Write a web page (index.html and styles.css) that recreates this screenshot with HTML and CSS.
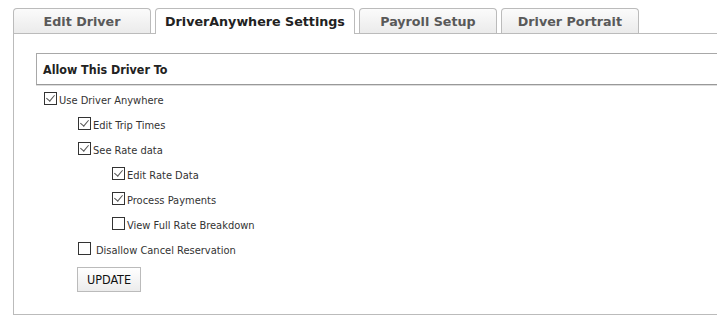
FILE: index.html
```html
<!DOCTYPE html>
<html lang="en">
<head>
    <meta charset="UTF-8">
    <meta name="viewport" content="width=device-width, initial-scale=1.0">
    <title>DriverAnywhere Settings</title>
    <link rel="stylesheet" href="styles.css">
</head>
<body>
    <div class="tabs">
        <div class="tab">Edit Driver</div>
        <div class="tab active">DriverAnywhere Settings</div>
        <div class="tab">Payroll Setup</div>
        <div class="tab">Driver Portrait</div>
    </div>

    <div class="panel">
        <div class="section-title">Allow This Driver To</div>
        <div class="options">
            <label class="option level-1"><input type="checkbox" checked>Use Driver Anywhere</label>
            <label class="option level-2"><input type="checkbox" checked>Edit Trip Times</label>
            <label class="option level-2"><input type="checkbox" checked>See Rate data</label>
            <label class="option level-3"><input type="checkbox" checked>Edit Rate Data</label>
            <label class="option level-3"><input type="checkbox" checked>Process Payments</label>
            <label class="option level-3"><input type="checkbox">View Full Rate Breakdown</label>
            <label class="option level-2 spaced"><input type="checkbox">Disallow Cancel Reservation</label>
        </div>
        <button type="button" class="update-button">UPDATE</button>
    </div>
</body>
</html>
```

FILE: styles.css
```css
body {
    margin: 0;
    padding: 0;
    background-color: #fff;
    font-family: "DejaVu Sans Condensed", "DejaVu Sans", sans-serif;
    font-size: 11px;
    color: #333;
    overflow: hidden;
}

.tabs {
    display: flex;
    align-items: flex-start;
    gap: 4px;
    padding: 8px 0 0 13px;
}

.tab {
    box-sizing: border-box;
    height: 25px;
    min-width: 138px;
    padding: 0 9px;
    border: 1px solid #bbb;
    border-bottom: none;
    border-radius: 4px 4px 0 0;
    background: linear-gradient(#fbfbfb, #ebebeb);
    display: flex;
    align-items: center;
    justify-content: center;
    font-family: "DejaVu Sans", Verdana, sans-serif;
    font-weight: bold;
    font-size: 12.7px;
    color: #595959;
}

.tab.active {
    height: 26px;
    margin-bottom: -1px;
    background: #fff;
    color: #222;
}

.panel {
    margin: 0 -20px 0 13px;
    padding: 19px 0 22px 22px;
    border: 1px solid #bbb;
}

.section-title {
    box-sizing: border-box;
    height: 32px;
    padding-left: 6px;
    display: flex;
    align-items: center;
    border: 1px solid #a8a8a8;
    border-bottom-color: #999;
    box-shadow: 0 1px 0 #ddd;
    font-weight: bold;
    font-size: 12.4px;
    color: #222;
}

.options {
    margin-top: 3px;
}

.option {
    height: 25px;
    display: flex;
    align-items: center;
}

.option.level-1 {
    margin-left: 8px;
}

.option.level-2 {
    margin-left: 42px;
}

.option.level-3 {
    margin-left: 76px;
}

.option input {
    appearance: none;
    -webkit-appearance: none;
    position: relative;
    box-sizing: border-box;
    width: 13px;
    height: 13px;
    margin: 0 2px 5px 0;
    border: 1px solid #333;
    background: #fff;
}

.option.spaced input {
    margin-right: 5px;
}

.option input:checked::after {
    content: "";
    position: absolute;
    left: 3px;
    top: 0px;
    width: 4px;
    height: 7px;
    border-right: 1px solid #555;
    border-bottom: 1px solid #555;
    transform: rotate(40deg);
}

.update-button {
    box-sizing: border-box;
    width: 64px;
    height: 25px;
    margin: 4px 0 0 41px;
    padding: 0;
    border: 1px solid #bbb;
    background: linear-gradient(#fff, #ececec);
    font-family: "DejaVu Sans Condensed", "DejaVu Sans", sans-serif;
    font-size: 12.5px;
    color: #111;
    cursor: pointer;
}
```
